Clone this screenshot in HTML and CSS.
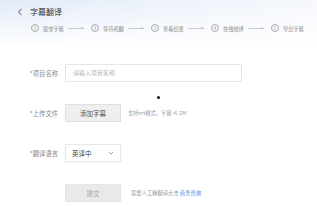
FILE: index.html
```html
<!DOCTYPE html>
<html>
<head>
<meta charset="utf-8">
<link rel="stylesheet" href="styles.css">
</head>
<body>
  <div class="page">
    <div class="head">
      <div class="title-row">
        <svg class="back" width="6" height="8" viewBox="0 0 6 8"><polyline points="4.5,0.8 1.5,4 4.5,7.2" fill="none" stroke="#444" stroke-width="0.9"/></svg>
        <span class="title">字幕翻译</span>
      </div>
      <div class="steps">
        <span class="num">1</span><span class="name">提交字幕</span>
        <svg class="arrow" width="16" height="4" viewBox="0 0 16 4"><path d="M0 2.5H15.5L13 1" fill="none" stroke="#aaa" stroke-width="0.6"/></svg>
        <span class="num">2</span><span class="name">等待机翻</span>
        <svg class="arrow" width="16" height="4" viewBox="0 0 16 4"><path d="M0 2.5H15.5L13 1" fill="none" stroke="#aaa" stroke-width="0.6"/></svg>
        <span class="num">3</span><span class="name">查看结果</span>
        <svg class="arrow" width="16" height="4" viewBox="0 0 16 4"><path d="M0 2.5H15.5L13 1" fill="none" stroke="#aaa" stroke-width="0.6"/></svg>
        <span class="num">4</span><span class="name">在线校译</span>
        <svg class="arrow" width="16" height="4" viewBox="0 0 16 4"><path d="M0 2.5H15.5L13 1" fill="none" stroke="#aaa" stroke-width="0.6"/></svg>
        <span class="num">5</span><span class="name">导出字幕</span>
      </div>
    </div>

    <div class="form">
      <div class="row">
        <span class="label">*项目名称</span>
        <div class="input">请输入项目名称</div>
      </div>
      <div class="row">
        <span class="label">*上传文件</span>
        <div class="btn">添加字幕</div>
        <span class="tip">支持srt格式，字幕 ≤ 2M</span>
      </div>
      <div class="row">
        <span class="label">*翻译语言</span>
        <div class="select">
          <span>英译中</span>
          <svg width="6" height="4" viewBox="0 0 6 4"><polyline points="0.8,0.8 3,3 5.2,0.8" fill="none" stroke="#777" stroke-width="0.7"/></svg>
        </div>
      </div>
      <div class="row">
        <span class="label"></span>
        <div class="btn submit">提交</div>
        <span class="tip tip-far">需要人工精翻请点击 <span class="link">商务咨询</span></span>
      </div>
    </div>

    <span class="dot"></span>
  </div>
</body>
</html>
```

FILE: styles.css
```css
html, body {
  margin: 0;
  padding: 0;
  background: #fff;
}
body {
  font-family: "Noto Sans CJK SC", "Noto Sans", sans-serif;
  color: #333;
}
.page {
  position: relative;
  width: 317px;
  height: 206px;
  overflow: hidden;
  background: linear-gradient(to bottom, rgba(255,255,255,0) 0, #fff 48px),
              linear-gradient(to right, #e2ebf8 0, #eef3fb 60%, #f6f8fc 100%);
}
.head {
  padding-top: 6px;
  height: 26px;
}
.title-row {
  display: flex;
  align-items: center;
  height: 11px;
  padding-left: 17px;
}
.back {
  display: block;
}
.title {
  margin-left: 7px;
  font-size: 8px;
  line-height: 11px;
  color: #333;
}
.steps {
  display: flex;
  align-items: center;
  margin-top: 7px;
  padding-left: 31px;
  height: 8px;
  font-size: 5.2px;
  color: #888;
}
.num {
  width: 6px;
  height: 6px;
  border: 0.6px solid #aaa;
  border-radius: 50%;
  display: flex;
  align-items: center;
  justify-content: center;
  font-size: 4.5px;
  color: #999;
}
.name {
  margin-left: 4px;
  width: 21px;
  white-space: nowrap;
}
.arrow {
  display: block;
  margin-left: 4px;
  margin-right: 7px;
}
.form {
  display: flex;
  flex-direction: column;
  gap: 22px;
  padding-top: 32px;
}
.row {
  display: flex;
  align-items: center;
  height: 18px;
}
.label {
  width: 58px;
  text-align: right;
  font-size: 6.3px;
  color: #888;
  white-space: nowrap;
}
.input {
  margin-left: 7px;
  width: 168px;
  height: 16px;
  border: 1px solid #e6e6e6;
  border-radius: 1px;
  box-sizing: content-box;
  padding-left: 7px;
  font-size: 6px;
  line-height: 16px;
  color: #b5b5b5;
}
.btn {
  margin-left: 7px;
  width: 56px;
  height: 18px;
  box-sizing: border-box;
  border: 1px solid #e0e0e0;
  background: #efefef;
  font-size: 6.5px;
  line-height: 16px;
  text-align: center;
  color: #555;
}
.submit {
  background: #e9e9e9;
  border-color: #e5e5e5;
  color: #a5a5a5;
}
.tip {
  margin-left: 7px;
  font-size: 5.3px;
  color: #999;
  white-space: nowrap;
}
.tip-far {
  margin-left: 10px;
}
.link {
  color: #4a8ae0;
}
.select {
  margin-left: 7px;
  width: 56px;
  height: 18px;
  box-sizing: border-box;
  border: 1px solid #e8e8e8;
  background: #fff;
  box-shadow: 0 1px 2px rgba(0,0,0,0.05);
  display: flex;
  align-items: center;
  justify-content: space-between;
  padding: 0 6px 0 6px;
  font-size: 6.5px;
  color: #444;
}
.select svg {
  display: block;
}
.dot {
  position: absolute;
  left: 157px;
  top: 96px;
  width: 3px;
  height: 3px;
  border-radius: 50%;
  background: #111;
}
```
